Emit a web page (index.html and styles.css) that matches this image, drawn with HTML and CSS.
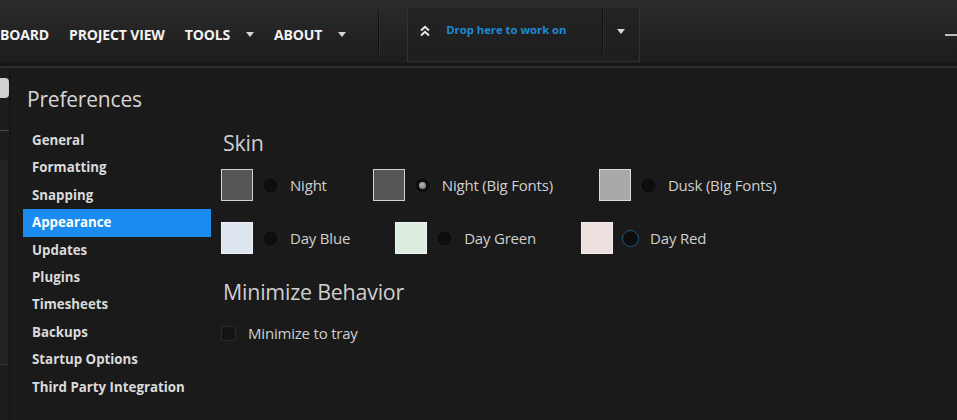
FILE: index.html
```html
<!DOCTYPE html>
<html lang="en">
<head>
<meta charset="utf-8">
<title>Preferences</title>
<link rel="stylesheet" href="styles.css">
</head>
<body>
<header class="topbar">
  <nav class="nav">
    <span class="nav-item">BOARD</span>
    <span class="nav-item">PROJECT VIEW</span>
    <span class="nav-item">TOOLS</span>
    <span class="caret"></span>
    <span class="nav-item">ABOUT</span>
    <span class="caret"></span>
  </nav>
  <div class="vsep"></div>
  <div class="dropbox">
    <div class="drop-main">
      <svg class="chev" width="10" height="12" viewBox="0 0 10 12"><path d="M1 5.5 L5 1.8 L9 5.5 M1 10.5 L5 6.8 L9 10.5" fill="none" stroke="#e8e8e8" stroke-width="2"/></svg>
      <span class="drop-text">Drop here to work on</span>
    </div>
    <div class="drop-menu"><span class="caret"></span></div>
  </div>
  <div class="spacer"></div>
  <span class="minbtn"></span>
</header>
<main class="main">
  <aside class="strip">
    <div class="strip-icon"></div>
    <div class="strip-rule"></div>
    <div class="strip-panel"></div>
  </aside>
  <section class="dialog">
    <h1 class="title">Preferences</h1>
    <div class="dialog-body">
      <ul class="menu">
        <li class="menu-item">General</li>
        <li class="menu-item">Formatting</li>
        <li class="menu-item">Snapping</li>
        <li class="menu-item active">Appearance</li>
        <li class="menu-item">Updates</li>
        <li class="menu-item">Plugins</li>
        <li class="menu-item">Timesheets</li>
        <li class="menu-item">Backups</li>
        <li class="menu-item">Startup Options</li>
        <li class="menu-item">Third Party Integration</li>
      </ul>
      <div class="content">
        <h2 class="section-title">Skin</h2>
        <div class="skin-row">
          <label class="skin"><span class="swatch sw-night"></span><span class="radio"></span><span class="skin-name">Night</span></label>
          <label class="skin"><span class="swatch sw-night"></span><span class="radio checked"></span><span class="skin-name">Night (Big Fonts)</span></label>
          <label class="skin"><span class="swatch sw-dusk"></span><span class="radio"></span><span class="skin-name">Dusk (Big Fonts)</span></label>
        </div>
        <div class="skin-row row2">
          <label class="skin"><span class="swatch sw-blue"></span><span class="radio"></span><span class="skin-name">Day Blue</span></label>
          <label class="skin"><span class="swatch sw-green"></span><span class="radio"></span><span class="skin-name">Day Green</span></label>
          <label class="skin"><span class="swatch sw-red"></span><span class="radio focus"></span><span class="skin-name">Day Red</span></label>
        </div>
        <h2 class="section-title section-2">Minimize Behavior</h2>
        <label class="check-row"><span class="checkbox"></span><span class="check-label">Minimize to tray</span></label>
      </div>
    </div>
  </section>
</main>
</body>
</html>
```
FILE: styles.css
```css
* { box-sizing: border-box; }
html, body { margin: 0; padding: 0; }
body {
  width: 957px;
  height: 420px;
  overflow: hidden;
  background: #1a1a1a;
  font-family: "Open Sans", "Noto Sans", sans-serif;
  color: #d4d4d4;
}
.topbar {
  height: 68px;
  display: flex;
  align-items: flex-start;
  background: linear-gradient(#2b2b2b, #1d1d1d 95%);
  border-bottom: 2px solid #2c2c2c;
  box-shadow: inset 0 -3px 0 #171717;
}
.nav {
  display: flex;
  align-items: center;
  height: 68px;
  gap: 20px;
}
.nav-item {
  font-weight: 700;
  font-size: 14px;
  color: #f2f2f2;
  letter-spacing: -0.15px;
}
.caret {
  width: 0;
  height: 0;
  border-left: 4px solid transparent;
  border-right: 4px solid transparent;
  border-top: 5px solid #d8d8d8;
  margin-left: -4px;
}
.vsep {
  width: 1px;
  height: 46px;
  margin: 10px 0 0 32px;
  background: #111;
  box-shadow: 1px 0 0 #2e2e2e;
}
.dropbox {
  display: flex;
  margin: 8px 0 0 28px;
  width: 233px;
  height: 54px;
  border: 1px solid #333;
  border-top: none;
  background: linear-gradient(#232323, #1e1e1e);
}
.drop-main {
  width: 195px;
  height: 47px;
  display: flex;
  align-items: center;
  padding-left: 12px;
  padding-bottom: 4px;
  border-right: 1px solid #121212;
  box-shadow: 1px 0 0 #2c2c2c;
}
.chev { margin-top: 2px; }
.drop-text {
  margin-left: 16px;
  font-weight: 700;
  font-size: 11.3px;
  color: #1f8ad4;
}
.drop-menu {
  flex: 1;
  display: flex;
  align-items: center;
  justify-content: center;
  padding-bottom: 7px;
}
.drop-menu .caret { margin-left: 0; }
.spacer { flex: 1; }
.minbtn {
  width: 12px;
  height: 2px;
  margin-top: 34px;
  background: #bdbdbd;
}
.main {
  display: flex;
  height: 352px;
}
.strip {
  width: 10px;
  border-right: 1px solid #121212;
  background: #1c1c1c;
  display: flex;
  flex-direction: column;
}
.strip-icon {
  margin-top: 10px;
  width: 9px;
  height: 20px;
  background: #d0d0d0;
  border-radius: 0 4px 4px 0;
}
.strip-rule {
  margin-top: 32px;
  width: 9px;
  height: 1px;
  background: #4a4a4a;
}
.strip-panel {
  margin-top: 29px;
  width: 8px;
  height: 205px;
  background: #232323;
  border-bottom: 1px solid #333;
}
.dialog {
  flex: 1;
  padding: 16px 0 0 13px;
  background: #1a1a1a;
}
.title {
  margin: 0 0 0 4px;
  font-weight: 400;
  font-size: 21px;
  line-height: 30px;
  color: #d6d6d6;
  letter-spacing: -0.2px;
}
.dialog-body {
  display: flex;
  margin-top: 13px;
}
.menu {
  list-style: none;
  margin: 0;
  padding: 0;
  width: 188px;
}
.menu-item {
  height: 27.4px;
  line-height: 27.4px;
  padding-left: 9px;
  font-weight: 700;
  font-size: 13.3px;
  color: #dadada;
}
.menu-item.active {
  background: #1a8cf0;
  color: #ffffff;
}
.content {
  padding-left: 10px;
  padding-top: 2px;
}
.section-title {
  margin: 0 0 0 2px;
  font-weight: 400;
  font-size: 21.4px;
  line-height: 28px;
  color: #cfcfcf;
  letter-spacing: -0.2px;
}
.section-2 { margin-top: 24px; }
.skin-row {
  display: flex;
  gap: 46px;
  margin-top: 12px;
}
.skin-row.row2 { margin-top: 21px; gap: 45px; }
.skin {
  display: flex;
  align-items: center;
}
.swatch {
  width: 32px;
  height: 32px;
  border: 1px solid #d2d2d2;
}
.sw-night { background: #555555; }
.sw-dusk { background: #a9a9a9; border-color: #dcdcdc; }
.sw-blue { background: #dde6ef; border-color: #eef2f6; }
.sw-green { background: #dcede0; border-color: #eef5ef; }
.sw-red { background: #eedfdf; border-color: #f5eeee; }
.radio {
  width: 17px;
  height: 17px;
  margin-left: 9px;
  border-radius: 50%;
  background: #0e0e0e;
  border: 1px solid #262626;
  display: flex;
  align-items: center;
  justify-content: center;
}
.radio.checked::after {
  content: "";
  width: 7px;
  height: 7px;
  border-radius: 50%;
  background: radial-gradient(circle at 40% 35%, #b8b8b8, #6a6a6a);
}
.radio.focus { border-color: #1d5a82; }
.skin-name {
  margin-left: 11px;
  font-size: 15px;
  color: #cfcfcf;
  letter-spacing: -0.2px;
}
.check-row {
  display: flex;
  align-items: center;
  margin-top: 17px;
}
.checkbox {
  width: 15px;
  height: 15px;
  background: #141414;
  border: 1px solid #2a2a2a;
}
.check-label {
  margin-left: 12px;
  font-size: 15px;
  color: #cfcfcf;
  letter-spacing: -0.2px;
}
```
